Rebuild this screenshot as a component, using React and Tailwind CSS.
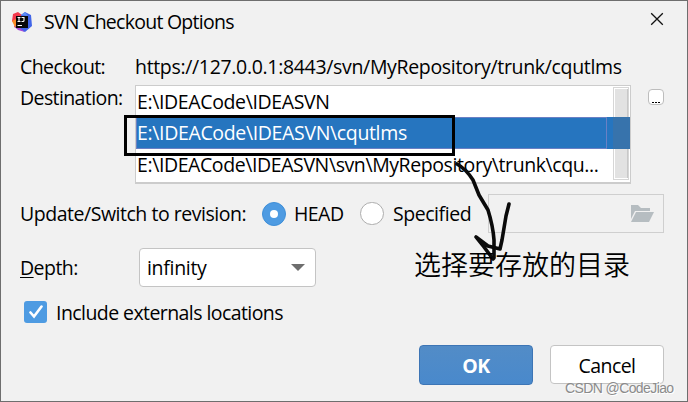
import React from "react";

function IdeaLogo() {
  return (
    <svg className="h-5 w-5 shrink-0" viewBox="0 0 20 20">
      <path d="M1 2 6 0 10 3 6 17 2 15 3 12 0 9Z" fill="#f4394d" />
      <path d="M0 9 4 7 6 15 3 15Z" fill="#fb8b25" />
      <path d="M9 3 13 0 19 3 20 14 13 20 6 17 3 15 12 9Z" fill="#4165e8" />
      <path d="M3 15 8 16 13 20 6 18Z" fill="#a64bd8" />
      <path d="M9 3 13 0 16 4Z" fill="#5c8df5" />
      <rect x="4" y="4" width="12" height="12" fill="#080808" />
      <path d="M5.5 5.5h3M7 5.5v4M5.5 9.5h3M9.5 5.5h2.5v3q0 1-1 1H9.5M5.5 13.5h4.5" fill="none" stroke="#fff" strokeWidth="1.1" />
    </svg>
  );
}

function PathRow({ children, selected }) {
  return (
    <div className={selected ? "flex h-8 items-center border border-[#6a80c4] bg-[#2675bf] text-white" : "flex h-[31px] items-center pl-px"}>
      {children}
    </div>
  );
}

export default function App() {
  return (
    <div className="relative flex h-[402px] w-[688px] flex-col overflow-hidden border border-[#6e6e6e] bg-[#f1f1f1] font-['Open_Sans','Noto_Sans_CJK_SC',sans-serif] text-[19.5px] leading-[26px] whitespace-nowrap text-black">
      <header className="flex h-[42px] items-center pr-[23px] pl-[11px]">
        <IdeaLogo />
        <h1 className="ml-3 grow tracking-[-0.74px]">SVN Checkout Options</h1>
        <svg className="mb-1.5 h-3.5 w-3.5" viewBox="0 0 14 14">
          <path d="M1.2 1.2 12.8 12.8M12.8 1.2 1.2 12.8" stroke="#111" strokeWidth="1.3" />
        </svg>
      </header>

      <div className="flex h-[42px] items-center pt-1.5 pl-[19px]">
        <span className="w-[115px] tracking-[-0.6px]">Checkout:</span>
        <span className="tracking-[-0.33px]">https://127.0.0.1:8443/svn/MyRepository/trunk/cqutlms</span>
      </div>

      <div className="flex h-[99px] pl-[19px]">
        <span className="w-[115px] tracking-[-0.6px]">Destination:</span>
        <div className="flex h-[99px] w-[496px] border border-b-2 border-[#cccccc] bg-white">
          <div className="w-[471px]">
            <PathRow><span className="tracking-[-0.37px]">E:\IDEACode\IDEASVN</span></PathRow>
            <PathRow selected><span className="tracking-[-0.35px]">E:\IDEACode\IDEASVN\cqutlms</span></PathRow>
            <PathRow><span className="tracking-[-0.41px]">E:\IDEACode\IDEASVN\svn\MyRepository\trunk\cqu...</span></PathRow>
          </div>
          <div className="flex grow flex-col">
            <div className="mt-px mr-px ml-1.5 h-[30px] border border-b-0 border-[#d6d6d6] bg-white pt-px pl-px"><div className="h-full border-r border-[#c8c8c8] bg-[#e2e2e2]" /></div>
            <div className="h-8 bg-[#2675bf] pl-1.5"><div className="h-8 bg-[#3773ac]" /></div>
            <div className="mr-px ml-1.5 h-[31px] border border-t-0 border-[#d6d6d6] bg-white pb-px pl-px"><div className="h-full border-r border-[#c8c8c8] bg-[#e2e2e2]" /></div>
          </div>
        </div>
        <button className="mt-1 ml-[17px] flex h-4 w-4 items-end justify-center gap-px rounded border border-[#bdbdbd] bg-white pb-px">
          <i className="h-px w-0.5 bg-black" /><i className="h-px w-0.5 bg-black" /><i className="h-px w-0.5 bg-black" />
        </button>
      </div>

      <div className="mt-[10px] flex h-[39px] items-center pl-[19px]">
        <span className="w-[242px] tracking-[-0.47px]">Update/Switch to revision:</span>
        <span className="flex h-6 w-6 items-center justify-center rounded-full border border-[#3f8fd8] bg-[#4e9be2]"><i className="h-2 w-2 rounded-full bg-white" /></span>
        <span className="ml-2 w-[66px] tracking-[-0.55px]">HEAD</span>
        <span className="h-[23px] w-6 rounded-full border border-[#adadad] bg-white" />
        <span className="ml-[9px] w-[95px] tracking-[-0.45px]">Specified</span>
        <div className="flex h-[39px] w-[176px] items-center justify-end border border-[#cfcfcf] pr-[9px]">
          <svg className="h-[17px] w-6" viewBox="0 0 24 17">
            <path d="M1 0h7l3 3h9v3H5L1 14Z" fill="#b6bdc1" />
            <path d="M6 7h18l-5 10H1Z" fill="#b6bdc1" />
          </svg>
        </div>
      </div>

      <div className="mt-[15px] flex h-[39px] items-center pl-[19px]">
        <span className="w-[119px] tracking-[-0.55px]"><span className="underline decoration-1 underline-offset-2 [text-decoration-skip-ink:none]">D</span>epth:</span>
        <div className="flex h-[39px] w-[177px] items-center justify-between rounded border border-[#c4c4c4] bg-white pr-[10px] pl-[7px]">
          <span className="tracking-[-0.3px]">infinity</span>
          <svg className="h-[7px] w-3.5" viewBox="0 0 14 7"><path d="M0 0h14L7 7Z" fill="#6e6e6e" /></svg>
        </div>
      </div>

      <div className="mt-3 flex h-[26px] items-center pl-[23px]">
        <span className="flex h-[22px] w-[23px] items-center justify-center rounded-[3px] bg-[#4e9be2]">
          <svg className="h-3.5 w-3.5" viewBox="0 0 14 14"><path d="M1.5 7.5 5 11.5 12.5 1.5" fill="none" stroke="#fff" strokeWidth="2.6" strokeLinecap="round" /></svg>
        </span>
        <span className="ml-[9px] pt-0.5 tracking-[-0.57px]">Include externals locations</span>
      </div>

      <footer className="mt-5 flex gap-[17px] pl-[418px]">
        <button className="h-10 w-[114px] rounded border border-[#3d75b5] bg-linear-to-b from-[#528cc7] to-[#4989cc] pt-0.5 font-bold tracking-[-0.5px] text-white">OK</button>
        <button className="h-[39px] w-[114px] rounded border border-[#c4c4c4] bg-white pt-0.5 tracking-[-0.55px]">Cancel</button>
      </footer>

      <div className="absolute top-[114px] left-[123px] h-[41px] w-[331px] border-3 border-black" />
      <svg className="absolute top-[159px] left-[449px] h-[105px] w-20" viewBox="450 160 80 105" fill="none" stroke="#0b0b0b" strokeWidth="3.6" strokeLinecap="round" strokeLinejoin="round">
        <path d="M457 164Q466 169 473 180L479 195 488 210Q493 226 494 240V258" />
        <path d="M509 204 506 216 502 240 500 249 488 246 476 237 484 247 493 259" />
      </svg>
      <div className="absolute top-[244px] left-[413px] text-[27px] leading-10 font-[350]">选择要存放的目录</div>
      <div className="absolute top-[377px] left-[564px] font-['Liberation_Sans',sans-serif] text-[14px] leading-5 tracking-[-0.6px] text-[#8b8b8b] [text-shadow:1px_1px_0_#ffffff]">CSDN @CodeJiao</div>
    </div>
  );
}
